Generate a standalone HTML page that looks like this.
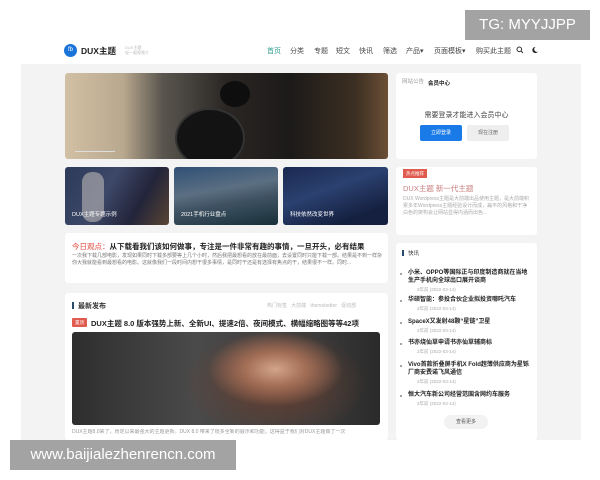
<!DOCTYPE html>
<html><head><meta charset="utf-8"><style>
*{margin:0;padding:0;box-sizing:border-box}
body{width:600px;height:480px;background:#fff;position:relative;overflow:hidden;font-family:"Liberation Sans","Noto Sans CJK SC",sans-serif;color:#333}
.a{position:absolute}
.card{position:absolute;background:#fff;border-radius:3px}
.nav span{position:absolute;top:46px;font-size:7px;color:#444}
.t{font-size:5px;color:#999;line-height:7px}
.news .i{position:absolute;left:12px;font-size:6px;font-weight:bold;color:#222;line-height:8px}
.news .d{position:absolute;left:21px;font-size:4.5px;color:#aaa}
.news .b{position:absolute;left:4px;width:2px;height:2px;background:#888;border-radius:1px}
</style></head><body>
<div class="a" style="left:465px;top:10px;width:125px;height:30px;background:#a3a3a3;color:#fff;font-size:15px;line-height:30px;text-align:center">TG: MYYJJPP</div>
<div class="a" style="left:64px;top:44px;width:13px;height:13px;border-radius:50%;background:#1a73d9;color:#fff;font-size:6px;line-height:13px;text-align:center">fb</div>
<div class="a" style="left:81px;top:45px;font-size:8.5px;font-weight:bold;color:#222">DUX主题</div>
<div class="a" style="left:125px;top:45px;font-size:4px;color:#bbb;line-height:5px">DUX主题<br>轻一般视频介</div>
<div class="nav">
<span style="left:267px;color:#2a9d8f">首页</span><span style="left:290px">分类</span><span style="left:314px">专题</span><span style="left:336px">短文</span><span style="left:359px">快讯</span><span style="left:383px">筛选</span><span style="left:406px">产品▾</span><span style="left:434px">页面模板▾</span><span style="left:476px">购买此主题</span>
</div>
<svg class="a" style="left:516px;top:46px" width="8" height="8" viewBox="0 0 8 8"><circle cx="3.3" cy="3.3" r="2.3" fill="none" stroke="#333" stroke-width="1"/><path d="M5 5L7 7" stroke="#333" stroke-width="1"/></svg>
<svg class="a" style="left:531px;top:46px" width="8" height="8" viewBox="0 0 8 8"><path d="M4.5 1A3 3 0 1 0 7 5.5 2.5 2.5 0 0 1 4.5 1Z" fill="#222"/></svg>
<div class="a" style="left:21px;top:64px;width:560px;height:376px;background:#f3f3f3"></div>
<div class="card" style="left:65px;top:73px;width:323px;height:86px;overflow:hidden;background:linear-gradient(90deg,#d2c0a4 0%,#b8a88e 18%,#5a564f 30%,#2a2624 50%,#1c1a19 70%,#3d2f22 90%,#6b4f36 100%)">
<div class="a" style="left:110px;top:35px;width:70px;height:60px;border-radius:50%;background:#141313;border:2px solid #333"></div>
<div class="a" style="left:155px;top:8px;width:30px;height:26px;border-radius:50%;background:#0e0e0e"></div>
<div class="a" style="left:10px;top:78px;width:40px;height:1px;background:#ddd"></div></div>
<div class="card" style="left:396px;top:73px;width:141px;height:86px">
<div class="a t" style="left:6px;top:6px;font-size:5.5px">网站公告</div>
<div class="a" style="left:32px;top:6px;font-size:5.5px;font-weight:bold;color:#222">会员中心</div>
<div class="a" style="left:0;top:37px;width:141px;text-align:center;font-size:7px;color:#444">需要登录才能进入会员中心</div>
<div class="a" style="left:24px;top:52px;width:42px;height:16px;background:#1a7be8;border-radius:2px;color:#fff;font-size:5px;line-height:16px;text-align:center">立即登录</div>
<div class="a" style="left:71px;top:52px;width:42px;height:16px;background:#eee;border-radius:2px;color:#666;font-size:5px;line-height:16px;text-align:center">现在注册</div></div>
<div class="card" style="left:65px;top:167px;width:104px;height:58px;overflow:hidden;background:linear-gradient(120deg,#2d3a5a,#3d4868 40%,#22243a 70%,#5a4534)"><div class="a" style="left:17px;top:5px;width:22px;height:50px;border-radius:10px;background:#c9c3c0;opacity:.55"></div><div class="a" style="left:7px;top:43px;font-size:5.5px;color:#fff">DUX主题专题示例</div></div>
<div class="card" style="left:174px;top:167px;width:104px;height:58px;background:linear-gradient(170deg,#2f5076,#5b6f82 40%,#3f5263 60%,#173038)"><div class="a" style="left:7px;top:43px;font-size:5.5px;color:#fff">2021手机行业盘点</div></div>
<div class="card" style="left:283px;top:167px;width:105px;height:58px;background:linear-gradient(160deg,#1a2850,#2b4170 40%,#152040 80%)"><div class="a" style="left:7px;top:43px;font-size:5.5px;color:#fff">科技依然改变世界</div></div>
<div class="card" style="left:65px;top:233px;width:323px;height:50px">
<div class="a" style="left:7px;top:8px;font-size:7.5px;font-weight:bold;color:#222;white-space:nowrap"><span style="color:#e0463b;font-weight:normal">今日观点：</span>从下载看我们该如何做事，专注是一件非常有趣的事情，一旦开头，必有结果</div>
<div class="a t" style="left:7px;top:20px;width:310px;color:#777">一次我下载几部电影，发现如果同时下载多部要等上几个小时，然后我把最想看的放在最前面，去设置同时只能下载一部。结果是不到一样杂你大我就能看到最想看的电影。这就像我们一段时间内想干很多事情，是同时干还是有选择有焦点的干，结果很不一样。同时...</div></div>
<div class="card" style="left:65px;top:293px;width:323px;height:147px">
<div class="a" style="left:7px;top:9px;width:1.5px;height:7px;background:#2a4a6a"></div>
<div class="a" style="left:13px;top:8px;font-size:7px;font-weight:bold;color:#333">最新发布</div>
<div class="a t" style="left:202px;top:10px;font-size:5px;color:#bbb;white-space:nowrap">热门标签 &nbsp; 大前端 &nbsp; themebetter &nbsp; 促动部</div>
<div class="a" style="left:7px;top:25px;width:15px;height:9px;background:#e05a4e;border-radius:1px;color:#fff;font-size:4.5px;line-height:9px;text-align:center">置顶</div>
<div class="a" style="left:26px;top:25px;font-size:7.5px;font-weight:bold;color:#222;white-space:nowrap">DUX主题 8.0 版本强势上新、全新UI、提速2倍、夜间模式、横幅缩略图等等42项</div>
<div class="a" style="left:7px;top:39px;width:308px;height:93px;border-radius:3px;background:radial-gradient(ellipse 22% 40% at 66% 40%,#d3a48a 0%,#a36e56 45%,transparent 100%),radial-gradient(ellipse 30% 60% at 66% 55%,#6a3f30 0%,transparent 100%),linear-gradient(90deg,#2e2e2e,#4a4a4a 40%,#3a3a3a 80%,#2a2a2a)"></div>
<div class="a t" style="left:7px;top:136px;width:310px;white-space:nowrap;overflow:hidden">DUX主题8.0来了，肯定以来最强大的主题更新。DUX 8.0 带来了很多全新的展示和功能，这得益于我们对DUX主题做了一次</div></div>
<div class="card" style="left:396px;top:167px;width:141px;height:68px">
<div class="a" style="left:7px;top:2px;width:24px;height:9px;background:#e05a4e;color:#fff;font-size:4.5px;line-height:9px;text-align:center">热点推荐</div>
<div class="a" style="left:7px;top:16px;font-size:7.5px;color:#c98080">DUX主题 新一代主题</div>
<div class="a t" style="left:7px;top:29px;width:128px;color:#aaa">DUX Wordpress主题是大前端出品使用主题，是大前端积累多年Wordpress主题经验设计而成，扁平的风格和干净白色的架构会让网站显得内涵而出色...</div></div>
<div class="card news" style="left:396px;top:243px;width:141px;height:197px">
<div class="a" style="left:6px;top:7px;width:1.5px;height:6px;background:#2a4a6a"></div>
<div class="a" style="left:12px;top:6px;font-size:5.5px;color:#333">快讯</div>
<div class="b" style="top:30px"></div><div class="i" style="top:26px;width:122px">小米、OPPO等国际正与印度制造商就在当地生产手机向全球出口展开谈商</div><div class="d" style="top:44px">2年前 (2022-03-14)</div>
<div class="b" style="top:57px"></div><div class="i" style="top:53px">华硕智能：参投合伙企业拟投资哪吒汽车</div><div class="d" style="top:63px">2年前 (2022-03-14)</div>
<div class="b" style="top:79px"></div><div class="i" style="top:75px">SpaceX又发射48颗“星链”卫星</div><div class="d" style="top:85px">2年前 (2022-03-14)</div>
<div class="b" style="top:100px"></div><div class="i" style="top:96px">书亦烧仙草申请书亦仙草辅商标</div><div class="d" style="top:106px">2年前 (2022-03-14)</div>
<div class="b" style="top:122px"></div><div class="i" style="top:118px;width:122px">Vivo首款折叠屏手机X Fold超薄供应商为星铄厂商安费诺飞风通信</div><div class="d" style="top:136px">2年前 (2022-03-14)</div>
<div class="b" style="top:152px"></div><div class="i" style="top:148px">恒大汽车新公司经营范围含网约车服务</div><div class="d" style="top:158px">2年前 (2022-03-14)</div>
<div class="a" style="left:48px;top:172px;width:44px;height:14px;background:#f2f2f2;border-radius:7px;font-size:5px;line-height:14px;text-align:center;color:#555">查看更多</div></div>
<div class="a" style="left:10px;top:440px;width:226px;height:30px;background:#a3a3a3;color:#fff;font-size:15px;line-height:30px;text-align:center">www.baijialezhenrencn.com</div>
</body></html>
